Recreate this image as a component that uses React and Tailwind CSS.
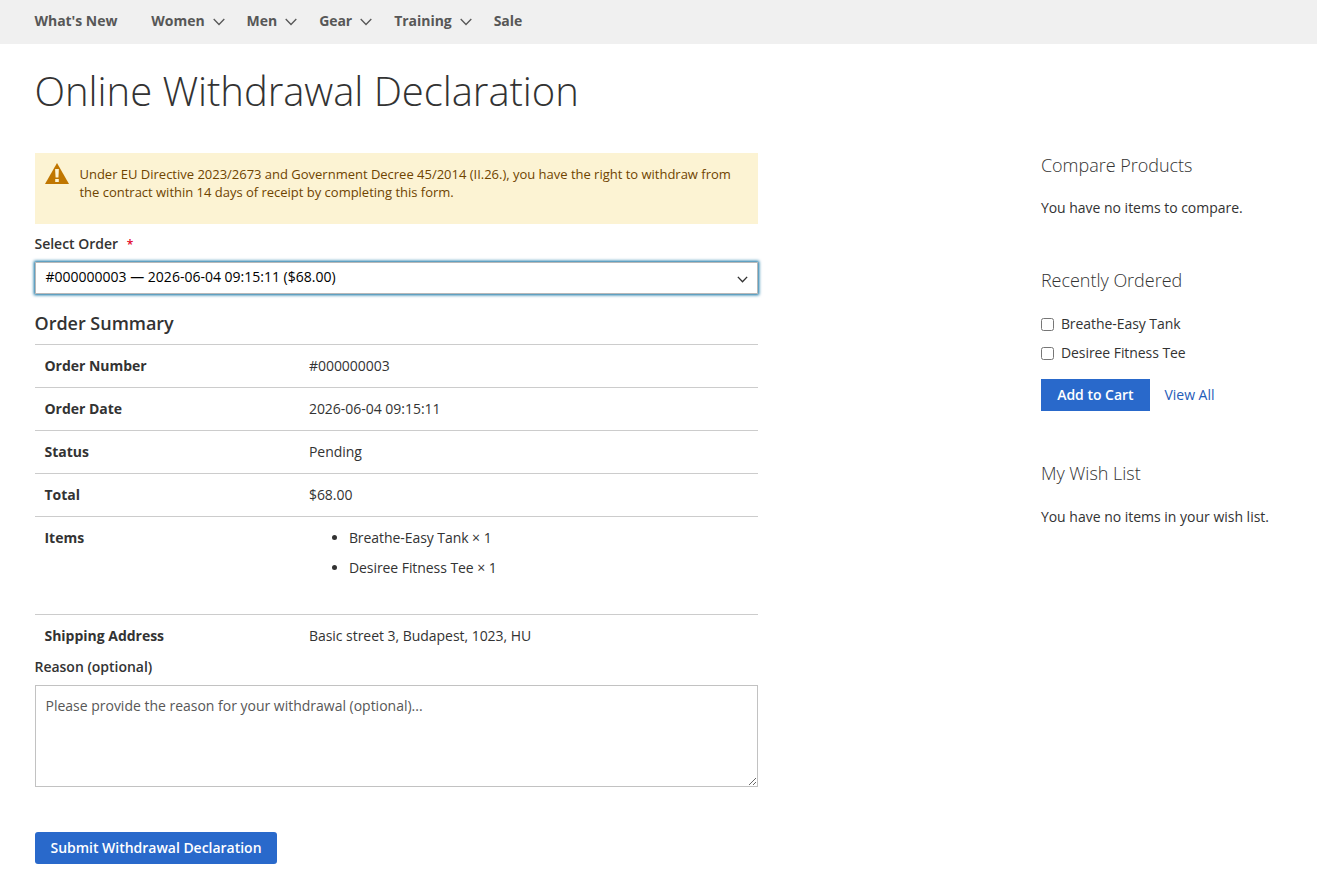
const NAV = [
  { label: "What's New" },
  { label: 'Women', sub: true },
  { label: 'Men', sub: true },
  { label: 'Gear', sub: true },
  { label: 'Training', sub: true },
  { label: 'Sale' },
]

const ROWS = [
  ['Order Number', '#000000003'],
  ['Order Date', '2026-06-04 09:15:11'],
  ['Status', 'Pending'],
  ['Total', '$68.00'],
]

function Chevron({ className }) {
  return (
    <svg viewBox="0 0 12 8" className={className} fill="none" stroke="currentColor">
      <path d="M0.7 1 L6 6.5 L11.3 1" />
    </svg>
  )
}

function Warning() {
  return (
    <svg viewBox="0 0 24 21" className="w-6 h-[21px] mt-[9.5px] ml-2.5 mr-[11px] flex-shrink-0">
      <path d="M12 0 L24 21 H0 Z" fill="#c07600" />
      <path d="M10.1 6 H13.9 L13.4 14.5 H10.6 Z" fill="#fcf3d3" />
      <rect x="10.2" y="16" width="3.6" height="3" fill="#fcf3d3" />
    </svg>
  )
}

export default function App() {
  return (
    <div className="h-[888px] overflow-hidden bg-white text-[#333] text-sm leading-5 tracking-[-0.02px] font-['Open_Sans',sans-serif]">
      <nav className="h-11 bg-[#f0f0f0] flex pl-[34.5px] pt-[11px] font-bold text-[#575757] tracking-[-0.04px]">
        {NAV.map((n) => (
          <a key={n.label} className="flex mr-[34px] last:mr-0">
            {n.label}
            {n.sub && <Chevron className="w-3 h-2 mt-[7px] ml-2 -mr-3 stroke-[1.3]" />}
          </a>
        ))}
      </nav>

      <h1 className="mt-[25px] ml-[34.5px] h-[44px] text-[40px] leading-[44px] font-light tracking-[-0.05px]">Online Withdrawal Declaration</h1>

      <div className="flex mt-10 pl-[34.5px]">
        <main className="w-[723px]">
          <div className="h-[71px] bg-[#fcf3d3] text-[#6f4400] flex text-[13px] leading-[18px]">
            <Warning />
            <p className="pt-3 tracking-[-0.012px] whitespace-nowrap">
              Under EU Directive 2023/2673 and Government Decree 45/2014 (II.26.), you have the right to withdraw from
              <br />
              the contract within 14 days of receipt by completing this form.
            </p>
          </div>

          <label className="block mt-2.5 font-semibold">
            Select Order <span className="ml-[5px] text-xs text-[#e2001f]">*</span>
          </label>
          <div className="mt-2 h-8 border border-[#b8b8b8] shadow-[0_0_3px_1px_#00699d] flex justify-between pl-2.5 pr-2.5 pt-1 text-black tracking-normal">
            <span>#000000003 — 2026-06-04 09:15:11 ($68.00)</span>
            <Chevron className="w-[11px] h-[7px] mt-[9px] -mr-px stroke-[1.6] text-[#333]" />
          </div>

          <h2 className="mt-[19px] mb-[11px] text-lg leading-5 font-semibold">Order Summary</h2>
          <div>
            {ROWS.map(([k, v]) => (
              <div key={k} className="h-[43px] border-t border-[#ccc] flex pt-[11px] pl-2.5">
                <b className="w-[264.4px]">{k}</b>
                <span>{v}</span>
              </div>
            ))}
            <div className="h-[98px] border-t border-[#ccc] flex pt-[11px] pl-2.5">
              <b className="w-[264.4px]">Items</b>
              <ul className="list-disc pl-10 tracking-[-0.06px]">
                <li className="mb-2.5">Breathe-Easy Tank × 1</li>
                <li>Desiree Fitness Tee × 1</li>
              </ul>
            </div>
            <div className="h-[42px] border-t border-[#ccc] flex pt-[11px] pl-2.5">
              <b className="w-[264.4px]">Shipping Address</b>
              <span className="tracking-[-0.035px]">Basic street 3, Budapest, 1023, HU</span>
            </div>
          </div>

          <label className="block mt-px font-semibold">Reason (optional)</label>
          <textarea
            placeholder="Please provide the reason for your withdrawal (optional)..."
            className="block mt-2 w-full h-[102px] border border-[#c2c2c2] p-2.5 leading-5 tracking-[-0.01px] resize placeholder:text-[#575757]"
          />
          <button className="block mt-[45px] w-[242px] h-8 rounded-[3px] bg-[#2969cb] text-white font-semibold pl-px">
            Submit Withdrawal Declaration
          </button>
        </main>

        <aside className="ml-[283.4px] pt-[2px]">
          <h3 className="text-lg leading-5 font-light">Compare Products</h3>
          <p className="mt-[23px]">You have no items to compare.</p>
          <h3 className="mt-[52px] text-lg leading-5 font-light">Recently Ordered</h3>
          <div className="mt-6 flex flex-col gap-[9px] tracking-[-0.06px]">
            {['Breathe-Easy Tank', 'Desiree Fitness Tee'].map((p) => (
              <label key={p} className="flex items-center">
                <input type="checkbox" className="w-[13px] h-[13px] mr-[7px]" />
                {p}
              </label>
            ))}
          </div>
          <div className="mt-4 flex items-center">
            <button className="w-[109px] h-8 bg-[#2969cb] text-white font-semibold">Add to Cart</button>
            <a className="ml-[14.6px] text-[#1f5cb8]">View All</a>
          </div>
          <h3 className="mt-[52px] text-lg leading-5 font-light">My Wish List</h3>
          <p className="mt-6 tracking-[-0.01px]">You have no items in your wish list.</p>
        </aside>
      </div>
    </div>
  )
}
